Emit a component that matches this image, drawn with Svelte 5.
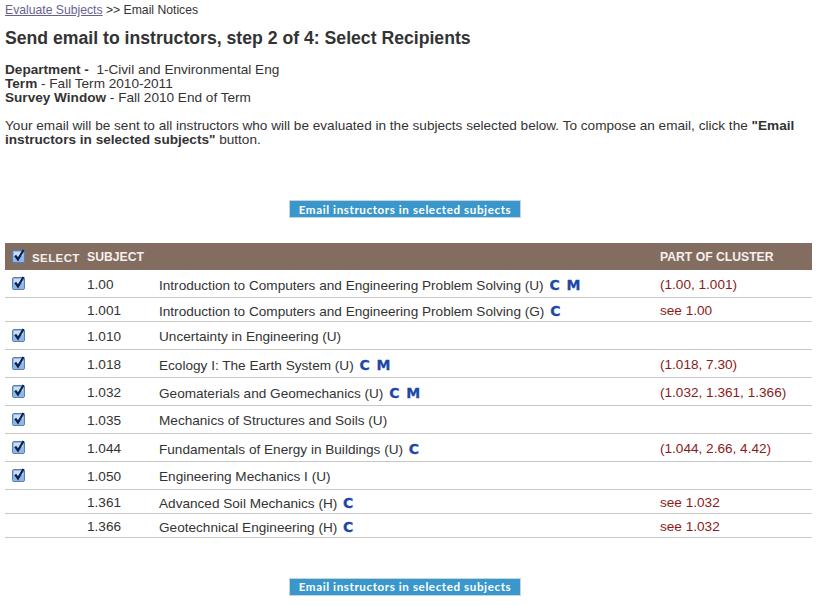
<script>
	const rows = [
		{ check: true, num: '1.00', title: 'Introduction to Computers and Engineering Problem Solving (U)', c: true, m: true, cluster: '(1.00, 1.001)', h: 27 },
		{ check: false, num: '1.001', title: 'Introduction to Computers and Engineering Problem Solving (G)', c: true, m: false, cluster: 'see 1.00', h: 24 },
		{ check: true, num: '1.010', title: 'Uncertainty in Engineering (U)', c: false, m: false, cluster: '', h: 28 },
		{ check: true, num: '1.018', title: 'Ecology I: The Earth System (U)', c: true, m: true, cluster: '(1.018, 7.30)', h: 28 },
		{ check: true, num: '1.032', title: 'Geomaterials and Geomechanics (U)', c: true, m: true, cluster: '(1.032, 1.361, 1.366)', h: 28 },
		{ check: true, num: '1.035', title: 'Mechanics of Structures and Soils (U)', c: false, m: false, cluster: '', h: 28 },
		{ check: true, num: '1.044', title: 'Fundamentals of Energy in Buildings (U)', c: true, m: false, cluster: '(1.044, 2.66, 4.42)', h: 28 },
		{ check: true, num: '1.050', title: 'Engineering Mechanics I (U)', c: false, m: false, cluster: '', h: 28 },
		{ check: false, num: '1.361', title: 'Advanced Soil Mechanics (H)', c: true, m: false, cluster: 'see 1.032', h: 24 },
		{ check: false, num: '1.366', title: 'Geotechnical Engineering (H)', c: true, m: false, cluster: 'see 1.032', h: 24 }
	];
</script>

{#snippet checkbox()}
	<svg class="check" width="14" height="14" viewBox="0 0 14 14">
		<rect x="0.5" y="1.5" width="12" height="12" rx="1.5" fill="#8fb8ea" stroke="#5b7fb0" />
		<rect x="2" y="3" width="9" height="4" fill="#c9def6" />
		<path d="M3.2 6.5 L6 10.5 L11.5 1" fill="none" stroke="#0d1f4a" stroke-width="2.2" />
	</svg>
{/snippet}

<div class="page">
	<div class="crumbs"><a href="#top">Evaluate Subjects</a> &gt;&gt; Email Notices</div>
	<h1>Send email to instructors, step 2 of 4: Select Recipients</h1>

	<div class="meta">
		<div><b>Department - </b>&nbsp;&nbsp;1-Civil and Environmental Eng</div>
		<div><b>Term</b> - Fall Term 2010-2011</div>
		<div><b>Survey Window</b> - Fall 2010 End of Term</div>
	</div>

	<p class="intro">
		Your email will be sent to all instructors who will be evaluated in the subjects selected below. To compose an email, click the <b>"Email instructors in selected subjects"</b> button.
	</p>

	<div class="action top"><button type="button">Email instructors in selected subjects</button></div>

	<table>
		<thead>
			<tr>
				<th class="col-select">{@render checkbox()}<span>SELECT</span></th>
				<th class="col-num">SUBJECT</th>
				<th></th>
				<th class="col-cluster">PART OF CLUSTER</th>
			</tr>
		</thead>
		<tbody>
			{#each rows as row}
				<tr style="height: {row.h}px">
					<td class="col-select">{#if row.check}{@render checkbox()}{/if}</td>
					<td class="col-num">{row.num}</td>
					<td class="title">
						{row.title}
						{#if row.c}<span class="tag">C</span>{/if}
						{#if row.m}<span class="tag m">M</span>{/if}
					</td>
					<td class="col-cluster cluster">{row.cluster}</td>
				</tr>
			{/each}
		</tbody>
	</table>

	<div class="action bottom"><button type="button">Email instructors in selected subjects</button></div>
</div>

<style>
	:global(body) {
		margin: 0;
		background: #fff;
	}

	.page {
		width: 812px;
		height: 606px;
		overflow: hidden;
		padding: 0 0 0 5px;
		box-sizing: border-box;
		font-family: 'Liberation Sans', Arial, sans-serif;
		font-size: 13.6px;
		line-height: 14px;
		color: #333;
	}

	.crumbs {
		padding-top: 3px;
		height: 17px;
		font-size: 12.2px;
		color: #333;
	}

	.crumbs a {
		color: #66628f;
	}

	h1 {
		margin: 9px 0 0;
		font-size: 17.65px;
		line-height: 19px;
		color: #333;
	}

	.meta {
		margin-top: 15px;
	}

	.intro {
		margin: 14px 0 0;
		width: 802px;
	}

	.action {
		display: flex;
		justify-content: center;
		width: 800px;
	}

	.action.top {
		margin-top: 53px;
	}

	.action.bottom {
		margin-top: 40px;
	}

	button {
		width: 232px;
		height: 18px;
		padding: 0;
		border: 1px solid #c5d5de;
		background: #3a97cc;
		color: #fff;
		font-family: 'Lato', 'Liberation Sans', sans-serif;
		font-size: 11.6px;
		font-weight: 700;
		letter-spacing: 0.6px;
	}

	table {
		margin-top: 25px;
		width: 807px;
		border-collapse: collapse;
		table-layout: fixed;
	}

	th {
		height: 27px;
		padding: 0;
		background: #836d60;
		color: #f4f0ec;
		font-size: 12.2px;
		font-weight: 700;
		text-align: left;
	}

	th.col-select span {
		letter-spacing: 0.4px;
		font-size: 11.5px;
		margin-left: 6px;
		vertical-align: -3px;
	}

	td {
		padding: 4px 0 0;
		box-sizing: border-box;
		border-bottom: 1px solid #c8c8c8;
	}

	.col-select {
		width: 82px;
		padding-left: 7px;
		box-sizing: border-box;
		vertical-align: middle;
	}

	td.col-select {
		vertical-align: top;
		padding-top: 6px;
	}

	.col-num {
		width: 72px;
	}

	.col-cluster {
		width: 152px;
	}

	.cluster {
		color: #8b1a1a;
	}

	.tag {
		color: #1d48a8;
		font-family: 'DejaVu Sans', sans-serif;
		font-weight: 700;
		font-size: 14px;
		-webkit-text-stroke: 0.3px #1d48a8;
		margin-left: 2px;
	}

	.tag.m {
		margin-left: 3px;
	}

	.check {
		display: inline-block;
		vertical-align: middle;
	}
</style>
